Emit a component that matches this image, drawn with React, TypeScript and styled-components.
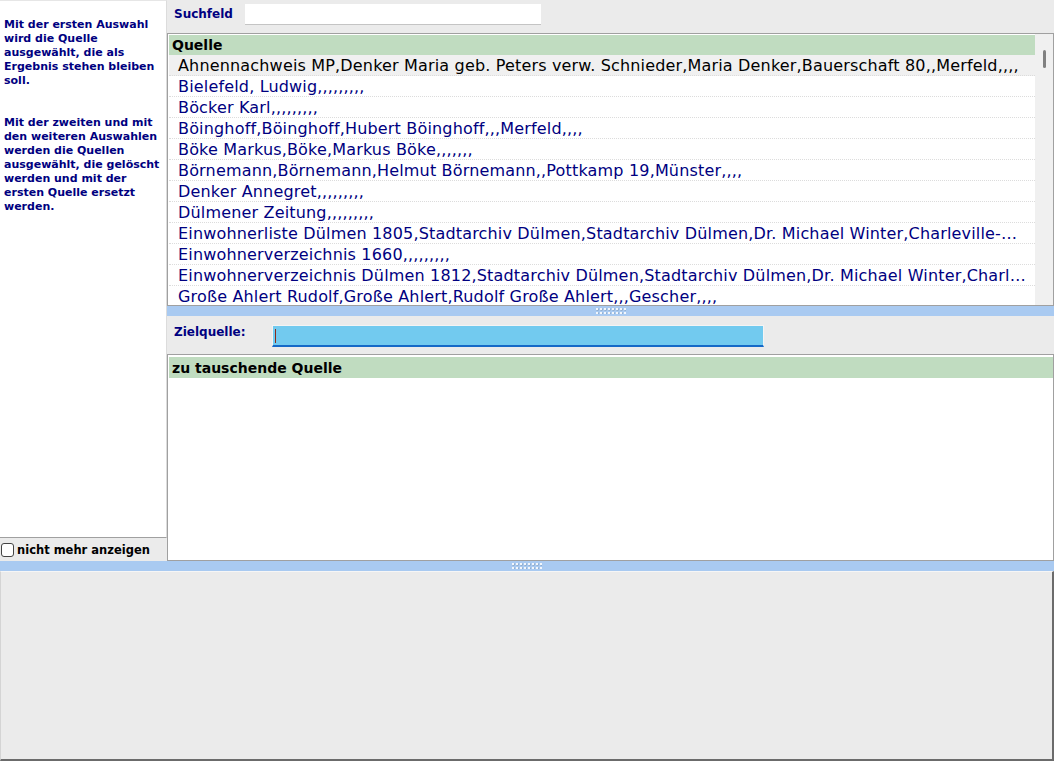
import styled, { createGlobalStyle } from "styled-components";

const GlobalStyle = createGlobalStyle`
  html, body {
    margin: 0;
    padding: 0;
    overflow: hidden;
    background: #ebebeb;
  }
`;

const Window = styled.div`
  display: flex;
  flex-direction: column;
  width: 1054px;
  height: 761px;
  background-color: #ebebeb;
  font-family: "DejaVu Sans", Verdana, sans-serif;
`;

const TopArea = styled.div`
  display: flex;
  height: 561px;
`;

const LeftColumn = styled.div`
  display: flex;
  flex-direction: column;
  width: 167px;
`;

const InfoPanel = styled.div`
  flex: 1;
  box-sizing: border-box;
  padding: 17px 0 0 4px;
  background-color: white;
  border-top: 1px solid #e6e6e6;
  border-right: 1px solid #dcdcdc;
  border-bottom: 1px solid #a0a0a0;
  color: #000080;
  font-size: 11px;
  font-weight: bold;
  line-height: 14px;
`;

const InfoParagraph = styled.p`
  margin: 0 0 28px 0;
  white-space: nowrap;
`;

const CheckRow = styled.label`
  display: flex;
  align-items: center;
  gap: 3px;
  height: 23px;
  color: #000;
  font-size: 11.5px;
  font-weight: bold;
`;

const Check = styled.input`
  appearance: none;
  width: 13px;
  height: 14px;
  margin: 0 0 0 1px;
  border: 1px solid #444;
  border-radius: 3px;
  background-color: white;
`;

const RightColumn = styled.div`
  display: flex;
  flex: 1;
  flex-direction: column;
  min-width: 0;
`;

const SearchRow = styled.div`
  display: flex;
  align-items: flex-start;
  height: 33px;
  box-sizing: border-box;
  padding: 4px 0 0 7px;
`;

const FieldLabel = styled.div`
  width: ${(props: { $width: number }) => props.$width}px;
  color: #000080;
  font-size: 12px;
  font-weight: bold;
  line-height: ${(props: { $line?: number }) => props.$line ?? 21}px;
`;

const SearchInput = styled.div`
  width: 296px;
  height: 21px;
  box-sizing: border-box;
  background-color: white;
  border-bottom: 1px solid #c4c4c4;
`;

const Panel = styled.div`
  display: flex;
  box-sizing: border-box;
  height: ${(props: { $height?: number }) => (props.$height ? props.$height + "px" : "auto")};
  flex: ${(props: { $height?: number }) => (props.$height ? "none" : "1")};
  background-color: white;
  border: 1px solid #a0a0a0;
`;

const PanelBody = styled.div`
  display: flex;
  flex: 1;
  flex-direction: column;
  min-width: 0;
  padding: ${(props: { $top: number }) => props.$top}px 0 0 1px;
  overflow: hidden;
`;

const PanelHeader = styled.div`
  flex: none;
  height: ${(props: { $height: number }) => props.$height}px;
  padding-left: 3px;
  background-color: #c0dcc0;
  color: #000;
  font-size: 14px;
  font-weight: bold;
  line-height: ${(props: { $height: number }) => props.$height + 1}px;
`;

const Row = styled.div`
  flex: none;
  height: 21px;
  box-sizing: border-box;
  padding: 1px 6px 0 9px;
  background-color: ${(props: { $selected?: boolean }) => (props.$selected ? "#f0f0f0" : "white")};
  border-bottom: 1px dotted #dcdcdc;
  color: ${(props: { $selected?: boolean }) => (props.$selected ? "#000" : "#000080")};
  font-size: 16px;
  letter-spacing: 0.17px;
  line-height: 20px;
  white-space: nowrap;
  overflow: hidden;
  text-overflow: ellipsis;
`;

const ScrollTrack = styled.div`
  flex: none;
  width: 18px;
  box-sizing: border-box;
  padding: 16px 0 0 8px;
  background-color: #f0f0f0;
`;

const ScrollThumb = styled.div`
  width: 3px;
  height: 18px;
  border-radius: 2px;
  background-color: #808080;
`;

const Splitter = styled.div`
  display: flex;
  justify-content: center;
  align-items: center;
  flex: none;
  height: 10px;
  background-color: #a9caf1;
`;

const ZielRow = styled.div`
  display: flex;
  align-items: flex-start;
  height: 38px;
  box-sizing: border-box;
  padding: 9px 0 0 7px;
`;

const ZielField = styled.div`
  display: flex;
  align-items: center;
  width: 492px;
  height: 22px;
  box-sizing: border-box;
  padding-left: 2px;
  background-color: #72caef;
  border: 1px solid #f4f4f4;
  border-bottom: 2px solid #1569c7;
`;

const Caret = styled.span`
  width: 1px;
  height: 14px;
  background-color: #8b2b1b;
`;

const BottomPanel = styled.div`
  flex: 1;
  background-color: #ebebeb;
  border-top: 1px solid #f6f6f6;
  border-left: 1px solid #d4d4d4;
  border-right: 2px solid #6b6b6b;
  border-bottom: 2px solid #6b6b6b;
`;

const Grip = () => (
  <svg width="30" height="6" viewBox="0 0 30 6">
    {[0, 4].map((y) =>
      Array.from({ length: 8 }, (_, i) => (
        <g key={`${y}-${i}`}>
          <rect x={i * 4 + 0.5} y={y + 0.5} width="2" height="2" fill="#7f93ad" />
          <rect x={i * 4} y={y} width="2" height="2" fill="#f2f6fb" />
        </g>
      ))
    )}
  </svg>
);

const infoFirst = [
  "Mit der ersten Auswahl",
  "wird die Quelle",
  "ausgewählt, die als",
  "Ergebnis stehen bleiben",
  "soll.",
];

const infoSecond = [
  "Mit der zweiten und mit",
  "den weiteren Auswahlen",
  "werden die Quellen",
  "ausgewählt, die gelöscht",
  "werden und mit der",
  "ersten Quelle ersetzt",
  "werden.",
];

const sources = [
  "Ahnennachweis MP,Denker Maria geb. Peters verw. Schnieder,Maria Denker,Bauerschaft 80,,Merfeld,,,,",
  "Bielefeld, Ludwig,,,,,,,,,",
  "Böcker Karl,,,,,,,,,",
  "Böinghoff,Böinghoff,Hubert Böinghoff,,,Merfeld,,,,",
  "Böke Markus,Böke,Markus Böke,,,,,,,",
  "Börnemann,Börnemann,Helmut Börnemann,,Pottkamp 19,Münster,,,,",
  "Denker Annegret,,,,,,,,,",
  "Dülmener Zeitung,,,,,,,,,",
  "Einwohnerliste Dülmen 1805,Stadtarchiv Dülmen,Stadtarchiv Dülmen,Dr. Michael Winter,Charleville-Mézières,,,,",
  "Einwohnerverzeichnis 1660,,,,,,,,,",
  "Einwohnerverzeichnis Dülmen 1812,Stadtarchiv Dülmen,Stadtarchiv Dülmen,Dr. Michael Winter,Charleville-Mézières,,,,",
  "Große Ahlert Rudolf,Große Ahlert,Rudolf Große Ahlert,,,Gescher,,,,",
  "Hüging Bernhard,,,,,,,,,",
  "Kirchenbuch Merfeld,,,,,,,,,",
];

const App = () => {
  return (
    <Window>
      <GlobalStyle />
      <TopArea>
        <LeftColumn>
          <InfoPanel>
            <InfoParagraph>
              {infoFirst.map((line, key) => (
                <div key={key}>{line}</div>
              ))}
            </InfoParagraph>
            <InfoParagraph>
              {infoSecond.map((line, key) => (
                <div key={key}>{line}</div>
              ))}
            </InfoParagraph>
          </InfoPanel>
          <CheckRow>
            <Check type="checkbox" />
            nicht mehr anzeigen
          </CheckRow>
        </LeftColumn>
        <RightColumn>
          <SearchRow>
            <FieldLabel $width={71}>Suchfeld</FieldLabel>
            <SearchInput />
          </SearchRow>
          <Panel $height={273}>
            <PanelBody $top={1}>
              <PanelHeader $height={20}>Quelle</PanelHeader>
              {sources.map((source, key) => (
                <Row key={key} $selected={key === 0}>
                  {source}
                </Row>
              ))}
            </PanelBody>
            <ScrollTrack>
              <ScrollThumb />
            </ScrollTrack>
          </Panel>
          <Splitter>
            <Grip />
          </Splitter>
          <ZielRow>
            <FieldLabel $width={98} $line={15}>
              Zielquelle:
            </FieldLabel>
            <ZielField>
              <Caret />
            </ZielField>
          </ZielRow>
          <Panel>
            <PanelBody $top={2}>
              <PanelHeader $height={21}>zu tauschende Quelle</PanelHeader>
            </PanelBody>
          </Panel>
        </RightColumn>
      </TopArea>
      <Splitter>
        <Grip />
      </Splitter>
      <BottomPanel />
    </Window>
  );
};

export default App;
